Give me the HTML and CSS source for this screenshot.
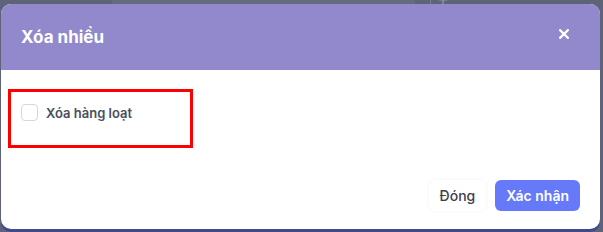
FILE: index.html
```html
<!DOCTYPE html>
<html lang="vi">
<head>
    <meta charset="UTF-8">
    <meta name="viewport" content="width=device-width, initial-scale=1.0">
    <title>Xóa nhiều</title>
    <link rel="stylesheet" href="styles.css">
</head>
<body>
    <div class="backdrop-bar">
        <div class="search-box"><span class="search-icon"></span>Tìm kiếm</div>
        <div class="plus">+</div>
    </div>

    <div class="modal">
        <div class="modal-header">
            <div class="modal-title">Xóa nhiều</div>
            <svg class="modal-close" width="10" height="10" viewBox="0 0 10 10">
                <path d="M1.2 1.2 L8.8 8.8 M8.8 1.2 L1.2 8.8" stroke="#fff" stroke-width="2.3" stroke-linecap="square"/>
            </svg>
        </div>
        <div class="modal-body">
            <div class="highlight">
                <label class="check-row">
                    <span class="checkbox"></span>
                    <span class="check-label">Xóa hàng loạt</span>
                </label>
            </div>
        </div>
        <div class="modal-footer">
            <button class="btn btn-light">Đóng</button>
            <button class="btn btn-primary">Xác nhận</button>
        </div>
    </div>
</body>
</html>
```

FILE: styles.css
```css
body {
    font-family: Inter, "Noto Sans", sans-serif;
    margin: 0;
    width: 603px;
    height: 232px;
    overflow: hidden;
    background-color: #5f6379;
    position: relative;
}

.backdrop-bar {
    position: absolute;
    top: 0;
    left: 0;
    right: 0;
    height: 4px;
}

.search-box {
    position: absolute;
    left: 112px;
    top: -12px;
    width: 303px;
    height: 16px;
    background-color: #666a80;
    color: #8b8fa0;
    font-size: 14px;
    line-height: 14px;
    padding-left: 33px;
    box-sizing: border-box;
}

.search-icon {
    position: absolute;
    left: 12px;
    top: 0;
    width: 8px;
    height: 3px;
    border: 1px solid #4a5590;
    border-top: 0;
}

.plus {
    position: absolute;
    left: 430px;
    top: -12px;
    color: #8b8fa0;
    font-size: 18px;
    border-left: 1px solid #7a7e92;
    padding-left: 6px;
}

.modal {
    position: absolute;
    top: 4px;
    left: 1px;
    width: 599px;
    height: 225px;
    background-color: #fff;
    border-radius: 10px;
    overflow: hidden;
    display: flex;
    flex-direction: column;
    box-shadow: 0 3px 0 #3e4a8c;
}

.modal-header {
    height: 66px;
    background-color: #9189cb;
    display: flex;
    justify-content: space-between;
    align-items: center;
    padding: 0 31px 0 20px;
    color: #fff;
}

.modal-title {
    font-size: 17px;
    font-weight: 700;
}

.modal-close {
    display: block;
    margin-top: -6px;
}

.modal-body {
    padding: 19px 0 0 7px;
}

.highlight {
    width: 185px;
    height: 59px;
    border: 3px solid #ff0000;
    padding: 12px 0 0 10px;
    box-sizing: border-box;
}

.check-row {
    display: flex;
    align-items: center;
    gap: 8px;
}

.checkbox {
    width: 15px;
    height: 15px;
    border: 1px solid #d5d7de;
    border-radius: 4px;
    background-color: #fff;
}

.check-label {
    font-size: 13px;
    font-weight: 600;
    color: #4b4f5c;
}

.modal-footer {
    margin-top: auto;
    display: flex;
    justify-content: flex-end;
    gap: 9px;
    padding: 0 20px 18px 0;
}

.btn {
    font-family: Inter, "Noto Sans", sans-serif;
    height: 31px;
    border: 0;
    border-radius: 6px;
    font-size: 14px;
    padding: 0 11px;
}

.btn-light {
    background-color: #fff;
    color: #3c404b;
    font-weight: 500;
    padding: 0 11px;
    box-shadow: 0 0 3px rgba(0, 0, 0, 0.06);
}

.btn-primary {
    background-color: #6679f8;
    color: #fff;
    font-weight: 600;
}
```
